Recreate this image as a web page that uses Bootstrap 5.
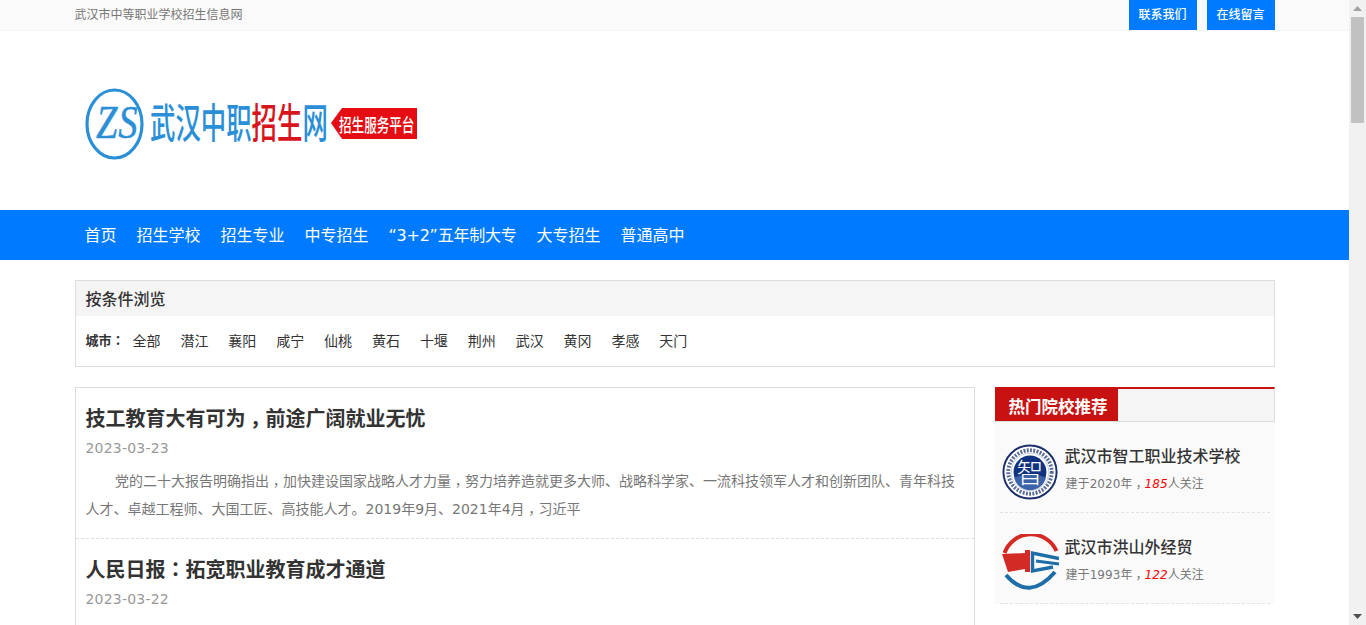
<!doctype html>
<html lang="zh-CN">
<head>
<meta charset="utf-8">
<title>武汉中职招生网</title>
<link href="https://cdn.jsdelivr.net/npm/bootstrap@5.3.0/dist/css/bootstrap.min.css" rel="stylesheet">
<style>
html,body{height:100%;overflow:hidden;}
body{font-family:"DejaVu Sans","Noto Sans CJK SC",sans-serif;color:#333;font-size:14px;background:#fff;}
::-webkit-scrollbar{display:none;}
.shell{height:625px;}
.page-area{width:1349px;overflow:hidden;flex:none;}
.wrap{width:1200px;margin:0 auto;}
.sbar{width:17px;background:#f1f1f1;flex:none;}
.sbar-thumb{width:13px;height:106px;background:#c1c1c1;margin:0 2px;}
.sbar-btn{height:17px;}
.topbar{height:31px;background:#fafafa;border-bottom:1px solid #f5f5f5;font-size:12px;color:#777;}
.top-txt{display:block;line-height:30px;}
.top-btns{gap:10px;}
.top-btn{width:68px;height:30px;padding:0;border:0;border-radius:0;background:#007bff;color:#fff;font-size:12px;line-height:30px;font-weight:500;}
.logo-band{height:179px;}
.mainnav{height:50px;background:#007bff;}
.mainnav .nav-link{color:#fff;font-size:16px;padding:0 10px;line-height:52px;}
.mainnav .nav-tight{letter-spacing:-.25px;}
.filter-box{margin-top:20px;border:1px solid #ddd;height:87px;}
.filter-head{height:35px;line-height:37px;background:#f5f5f5;padding:0 10px;font-size:16px;font-weight:500;}
.filter-body{padding:0 10px;height:50px;font-size:14px;}
.filter-body b{font-weight:700;font-size:13px;margin-right:8px;}
.filter-body a{color:#333;text-decoration:none;margin-right:19.9px;}
.content-row{margin-top:20px;}
.articles{width:900px;border:1px solid #ddd;border-bottom:0;flex:none;}
.art-item{height:151px;padding:15px 10px 0;border-bottom:1px dashed #ddd;}
.art-title{font-size:20px;font-weight:700;line-height:32px;margin:0;color:#333;}
.art-date{font-size:14px;color:#999;line-height:30px;letter-spacing:.2px;margin-top:-2px;}
.art-text{margin:4px 0 0;line-height:28px;font-size:14px;color:#777;}
.art-line{display:block;white-space:nowrap;}
.art-first{padding-left:29.5px;}
.zhc{font-family:"Noto Sans CJK TC",sans-serif;line-height:0;}
.zhc-low{font-family:"Noto Sans CJK TC",sans-serif;line-height:0;vertical-align:-.3em;}
.side{width:280px;flex:none;}
.side-head{height:35px;border-top:2px solid #c81212;border-right:1px solid #ddd;border-bottom:1px solid #ddd;background:#f5f5f5;}
.side-tab{display:inline-block;width:123px;height:32px;padding-left:14px;background:#c81212;color:#fff;font-size:16.5px;font-weight:700;line-height:38px;white-space:nowrap;overflow:hidden;}
.side-list{background:#fafafa;padding:0 5px;}
.side-item{height:91px;border-bottom:1px dashed #e2e2e2;padding-left:1px;gap:6px;}
.side-logo{flex:none;margin-top:10px;}
.side-info{padding-top:4px;}
.side-name{font-size:16px;font-weight:500;color:#333;line-height:24px;}
.side-sub{font-size:12px;color:#777;line-height:18px;margin:6px 0 0 1px;letter-spacing:.07px;}
.side-sub i{color:#f00;}
.logo-txt{font-family:"Noto Sans CJK SC",sans-serif;font-weight:500;}
.logo-ser{font-family:"Liberation Serif",serif;font-style:italic;}
</style>
</head>
<body>
<div class="shell d-flex">
 <div class="page-area">
  <div class="topbar">
   <div class="wrap d-flex justify-content-between align-items-start">
    <span class="top-txt">武汉市中等职业学校招生信息网</span>
    <div class="d-flex top-btns">
     <a class="btn top-btn" href="#">联系我们</a>
     <a class="btn top-btn" href="#">在线留言</a>
    </div>
   </div>
  </div>
  <div class="logo-band d-flex align-items-center">
   <div class="wrap">
    <svg width="360" height="100" viewBox="0 0 360 100" role="img" aria-label="武汉中职招生网" class="d-block">
     <ellipse cx="39.5" cy="53" rx="27.5" ry="34" fill="none" stroke="#2b8fd8" stroke-width="3.2"/>
     <g transform="translate(21,67) scale(.82,1)"><text class="logo-ser" font-size="47" fill="#2b8fd8" stroke="#2b8fd8" stroke-width=".5" letter-spacing="1">ZS</text></g>
     <g class="logo-txt" font-size="41">
      <g transform="translate(75,67) scale(.62,1)"><text fill="#2b8fd8">武汉中职</text></g>
      <g transform="translate(176.6,67) scale(.62,1)"><text fill="#d8141c">招生</text></g>
      <g transform="translate(227.4,67) scale(.62,1)"><text fill="#2b8fd8">网</text></g>
     </g>
     <polygon points="256,52 267,37 342,37 342,68 267,68" fill="#e60d12"/>
     <g transform="translate(264,61) scale(.74,1.1)"><text class="logo-txt" font-size="17" fill="#fff">招生服务平台</text></g>
    </svg>
   </div>
  </div>
  <div class="mainnav">
   <div class="wrap">
    <ul class="nav">
     <li class="nav-item"><a class="nav-link" href="#">首页</a></li>
     <li class="nav-item"><a class="nav-link" href="#">招生学校</a></li>
     <li class="nav-item"><a class="nav-link" href="#">招生专业</a></li>
     <li class="nav-item"><a class="nav-link" href="#">中专招生</a></li>
     <li class="nav-item"><a class="nav-link nav-tight" href="#">“3+2”五年制大专</a></li>
     <li class="nav-item"><a class="nav-link" href="#">大专招生</a></li>
     <li class="nav-item"><a class="nav-link" href="#">普通高中</a></li>
    </ul>
   </div>
  </div>
  <div class="wrap">
   <div class="filter-box">
    <div class="filter-head">按条件浏览</div>
    <div class="filter-body d-flex align-items-center">
     <b>城市<span class="zhc" lang="zh-TW">：</span></b><a href="#">全部</a><a href="#">潜江</a><a href="#">襄阳</a><a href="#">咸宁</a><a href="#">仙桃</a><a href="#">黄石</a><a href="#">十堰</a><a href="#">荆州</a><a href="#">武汉</a><a href="#">黄冈</a><a href="#">孝感</a><a href="#">天门</a>
    </div>
   </div>
   <div class="content-row d-flex justify-content-between">
    <div class="articles">
     <div class="art-item">
      <h2 class="art-title">技工教育大有可为<span class="zhc-low" lang="zh-TW">，</span>前途广阔就业无忧</h2>
      <div class="art-date">2023-03-23</div>
      <p class="art-text"><span class="art-line art-first">党的二十大报告明确指出<span class="zhc-low" lang="zh-TW">，</span>加快建设国家战略人才力量<span class="zhc-low" lang="zh-TW">，</span>努力培养造就更多大师、战略科学家、一流科技领军人才和创新团队、青年科技</span><span class="art-line">人才、卓越工程师、大国工匠、高技能人才。2019年9月、2021年4月<span class="zhc-low" lang="zh-TW">，</span>习近平</span></p>
     </div>
     <div class="art-item">
      <h2 class="art-title">人民日报<span class="zhc" lang="zh-TW">：</span>拓宽职业教育成才通道</h2>
      <div class="art-date">2023-03-22</div>
     </div>
    </div>
    <div class="side">
     <div class="side-head"><span class="side-tab">热门院校推荐</span></div>
     <div class="side-list">
      <div class="side-item d-flex align-items-center">
       <svg width="58" height="58" viewBox="0 0 60 60" class="side-logo">
        <circle cx="30" cy="30" r="27.5" fill="#fff" stroke="#1a2f6b" stroke-width="2"/>
        <circle cx="30" cy="30" r="22.5" fill="none" stroke="#5a6d99" stroke-width="4" stroke-dasharray="2 1.4"/>
        <circle cx="30" cy="30" r="19.5" fill="none" stroke="#c5ccdc" stroke-width="1"/>
        <circle cx="30" cy="30" r="17" fill="#11327f"/>
        <path d="M13.5 36Q30 28 46.5 36A17 17 0 0 1 13.5 36Z" fill="#3c63a8"/>
        <text x="30" y="41" text-anchor="middle" font-family="Noto Sans CJK SC" font-weight="300" font-size="28" fill="#fff">智</text>
       </svg>
       <div class="side-info">
        <div class="side-name">武汉市智工职业技术学校</div>
        <div class="side-sub">建于2020年<span class="zhc-low" lang="zh-TW">，</span><i>185</i>人关注</div>
       </div>
      </div>
      <div class="side-item d-flex align-items-center">
       <svg width="58" height="58" viewBox="0 0 58 58" class="side-logo">
        <path d="M3.5 19A28 28 0 0 1 55.5 17" fill="none" stroke="#d42a25" stroke-width="4"/>
        <path d="M1 20 24 19V16H29V38H24V35L7 38Z" fill="#d42a25"/>
        <path d="M5 41Q28 68 54 38" fill="none" stroke="#1c6da8" stroke-width="4"/>
        <path d="M58 24.5 31.5 19V37L52 33" fill="none" stroke="#1c6da8" stroke-width="3.4"/>
        <path d="M35 27 58 30" fill="none" stroke="#1c6da8" stroke-width="2.8"/>
       </svg>
       <div class="side-info">
        <div class="side-name">武汉市洪山外经贸</div>
        <div class="side-sub">建于1993年<span class="zhc-low" lang="zh-TW">，</span><i>122</i>人关注</div>
       </div>
      </div>
     </div>
    </div>
   </div>
  </div>
 </div>
 <div class="sbar d-flex flex-column">
  <div class="sbar-btn d-flex align-items-center justify-content-center">
   <svg width="9" height="5" viewBox="0 0 9 5"><path d="M4.5 0 9 5H0Z" fill="#a3a3a3"/></svg>
  </div>
  <div class="sbar-thumb"></div>
  <div class="flex-grow-1"></div>
  <div class="sbar-btn d-flex align-items-center justify-content-center">
   <svg width="9" height="5" viewBox="0 0 9 5"><path d="M0 0H9L4.5 5Z" fill="#505050"/></svg>
  </div>
 </div>
</div>
</body>
</html>
